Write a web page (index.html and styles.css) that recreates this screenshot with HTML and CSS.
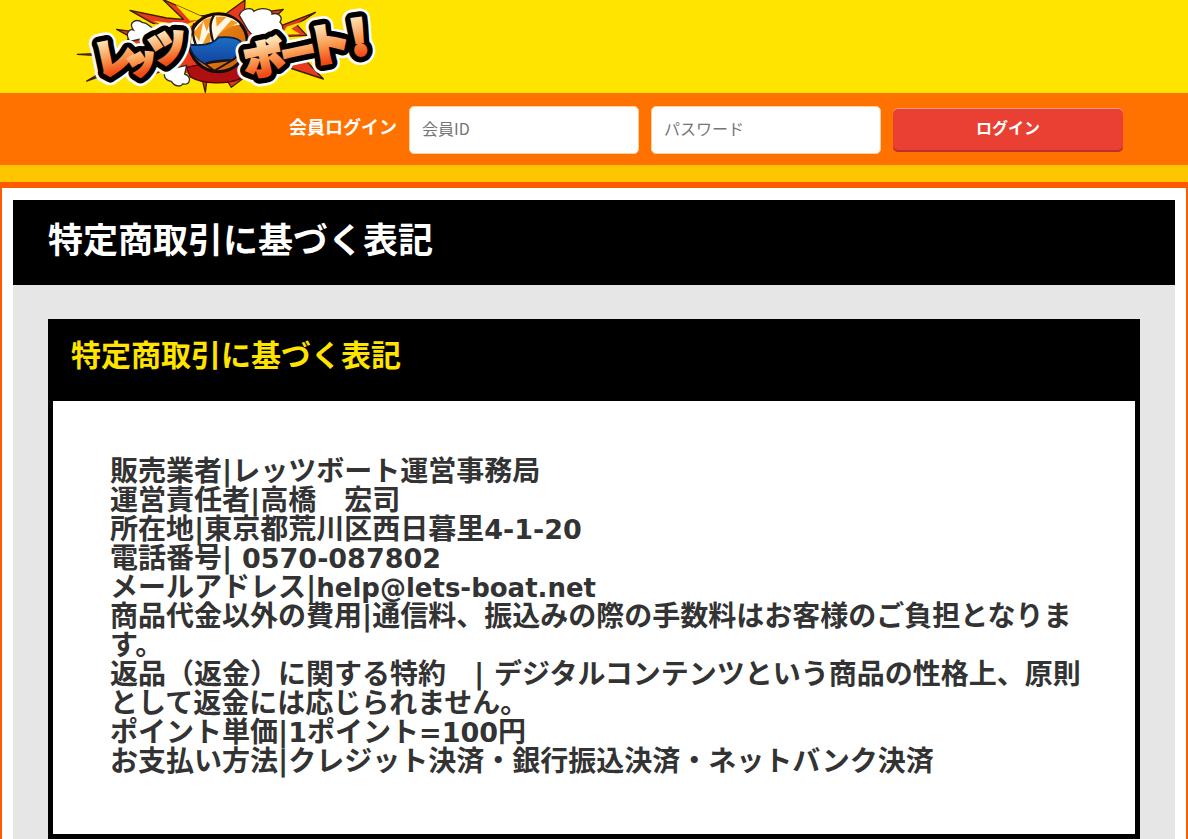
FILE: index.html
```
<!DOCTYPE html>
<html lang="ja">

<head>
    <meta charset="UTF-8">
    <meta name="viewport" content="width=device-width, initial-scale=1">
    <title>特定商取引に基づく表記 | レッツボート!</title>
    <link rel="stylesheet" href="styles.css">
</head>

<body>
    <!-- ヘッダー -->
    <header class="header">
        <a href="#" class="logo" aria-label="レッツボート!">
            <svg viewBox="0 0 930 279" xmlns="http://www.w3.org/2000/svg">
                <defs>
                    <linearGradient id="fire" x1="0" y1="0" x2="0" y2="1">
                        <stop offset="0.25" stop-color="#ffe2b4" />
                        <stop offset="0.55" stop-color="#fb9a50" />
                        <stop offset="0.82" stop-color="#f04a14" />
                    </linearGradient>
                    <linearGradient id="orange" x1="0" y1="0" x2="1" y2="1">
                        <stop offset="0" stop-color="#ff9a1a" />
                        <stop offset="1" stop-color="#c85a08" />
                    </linearGradient>
                    <linearGradient id="wave" x1="0" y1="0" x2="0" y2="1">
                        <stop offset="0" stop-color="#1c6fc4" />
                        <stop offset="1" stop-color="#1242a0" />
                    </linearGradient>
                    <g id="letters">
                        <text font-size="122" transform="translate(84 227) rotate(-12)">レ</text>
                        <text font-size="98" transform="translate(172 227) rotate(-12)">ッ</text>
                        <text font-size="112" transform="translate(248 196) rotate(-12)">ツ</text>
                        <text font-size="120" transform="translate(532 231) rotate(-12)">ボ</text>
                        <text font-size="102" transform="translate(642 203) rotate(-12)">ー</text>
                        <text font-size="132" transform="translate(718 192) rotate(-10)">ト</text>
                        <text font-size="142" transform="translate(846 168) rotate(-8)">!</text>
                    </g>
                </defs>
                <!-- 爆発 -->
                <g stroke="#3a2000" stroke-width="4" stroke-linejoin="round">
                    <path fill="#e8391f" d="M180 31 L290 54 L340 58 L278 -2 L392 48 L470 40 L525 0 L523 45 L640 28 L600 66 L636 76 L736 37 L680 74 L710 106 L640 110 L760 237 L660 204 L540 220 L484 262 L474 246 L410 245 L406 277 L398 244 L350 220 L290 206 L197 247 L240 205 L150 208 L50 243 L100 214 L130 170 L22 163 L145 158 L180 110 L140 88 L210 98 L300 96 L245 68 Z" />
                    <path fill="#ffe400" stroke="none" d="M210 76 L262 72 L300 92 L250 100 L200 96 Z M250 62 L345 74 L382 60 L350 90 L310 94 Z M316 14 L410 56 L360 62 Z M650 80 L704 62 L664 86 L690 102 L636 104 Z M280 210 L350 218 L380 240 L300 210 Z" />
                </g>
                <!-- 煙 -->
                <g fill="#fff" stroke="#332c22" stroke-width="4">
                    <path d="M177 120 C164 98 180 86 190 90 C172 66 200 54 218 68 C230 66 238 80 248 84 C240 110 220 118 177 124 Z" />
                    <path d="M508 46 C516 24 545 20 552 34 C570 20 608 26 606 42 C626 36 640 52 630 66 C646 82 638 106 616 110 C588 118 548 118 530 84 Z" />
                    <path d="M296 208 C276 218 280 240 304 244 C316 262 334 260 338 252 C362 256 366 230 344 222 L350 196 Z" />
                </g>
                <path d="M350 202 C400 190 480 185 522 196 L512 236 C470 254 400 254 360 230 Z" fill="#b00f12" stroke="#4a0505" stroke-width="4" />
                <!-- ヘルメット -->
                <circle cx="445" cy="128" r="87" fill="url(#orange)" stroke="#140c08" stroke-width="9" />
                <path d="M364 134 C360 86 396 54 432 48 C474 44 500 60 510 74 C474 76 444 94 428 132 Z" fill="#fff6e6" />
                <path d="M370 98 L400 62 L388 124 Z M398 60 L428 52 L410 94 L404 76 Z M438 50 L470 50 L440 80 Z M484 60 L504 68 L450 98 Z M414 100 L428 100 L418 130 L398 132 Z" fill="#f6981e" />
                <path d="M373 70 C366 90 370 116 378 136 M432 46 C418 66 418 90 432 132" fill="none" stroke="#20130c" stroke-width="7" />
                <path d="M358 134 C394 138 430 134 446 112 C472 110 498 112 512 124 C512 148 496 178 488 180 C458 186 430 184 405 192 C380 180 362 158 358 134 Z" fill="url(#wave)" stroke="#0c2046" stroke-width="5" />
                <path d="M406 192 C430 180 464 182 488 180 L510 162 M488 180 L434 212 M406 192 L434 213" fill="none" stroke="#1c120c" stroke-width="6" />
                <!-- ロゴ文字 -->
                <use href="#letters" class="logo-white" />
                <use href="#letters" class="logo-black" />
                <use href="#letters" class="logo-fill" />
            </svg>
        </a>
    </header>

    <!-- ログイン -->
    <form class="login">
        <label for="memberId">会員ログイン</label>
        <input type="text" id="memberId" placeholder="会員ID">
        <input type="password" id="password" placeholder="パスワード" aria-label="パスワード">
        <button type="submit">ログイン</button>
    </form>
    <div class="line"></div>

    <!-- メイン -->
    <main class="main">
        <h1>特定商取引に基づく表記</h1>
        <div class="content">
            <section class="box">
                <h2>特定商取引に基づく表記</h2>
                <div class="box-text">
                    販売業者|レッツボート運営事務局<br>
                    運営責任者|高橋　宏司<br>
                    所在地|東京都荒川区西日暮里<span class="num">4-1-20</span><br>
                    電話番号| <span class="num">0570-087802</span><br>
                    メールアドレス|<span class="mail">help@lets-boat.net</span><br>
                    商品代金以外の費用|通信料、振込みの際の手数料はお客様のご負担となります。<br>
                    返品（返金）に関する特約　| デジタルコンテンツという商品の性格上、原則として返金には応じられません。<br>
                    ポイント単価|<span class="num">1</span>ポイント<span class="num">=100</span>円<br>
                    お支払い方法|クレジット決済・銀行振込決済・ネットバンク決済
                </div>
            </section>
        </div>
    </main>
</body>

</html>
```
FILE: styles.css
```
* {
    box-sizing: border-box;
}

body {
    margin: 0;
    background: #fff;
    color: #333;
    font-family: "Noto Sans CJK JP", sans-serif;
}

/* ヘッダー */
.header {
    height: 93px;
    padding-left: 70px;
    background: #ffe400;
}

.logo {
    display: block;
    width: 310px;
}

.logo svg {
    display: block;
    width: 100%;
}

.logo text {
    font-family: "Noto Sans CJK JP", sans-serif;
    font-weight: 900;
}

.logo-white {
    fill: #fff;
    stroke: #fff;
    stroke-width: 58px;
    stroke-linejoin: round;
}

.logo-black {
    fill: #000;
    stroke: #000;
    stroke-width: 42px;
    stroke-linejoin: round;
}

.logo-fill {
    fill: url(#fire);
    stroke: url(#fire);
    stroke-width: 9px;
}

/* ログイン */
.login {
    display: flex;
    justify-content: flex-end;
    align-items: center;
    gap: 12px;
    height: 72px;
    padding: 2px 65px 0 12px;
    background: #ff7200;
}

.login label {
    padding-bottom: 8px;
    color: #fff;
    font-size: 18px;
    font-weight: bold;
}

.login input {
    width: 230px;
    height: 48px;
    padding: 0 12px 4px;
    border: 1px solid #ffd0a0;
    border-radius: 5px;
    background: #fff;
    font-family: inherit;
    font-size: 16px;
}

.login input::placeholder {
    color: #757575;
}

.login button {
    width: 230px;
    height: 44px;
    padding: 0 0 6px;
    border: none;
    border-radius: 5px;
    background: #e94033;
    box-shadow: inset 0 1px 0 #f3988f, inset 0 -2px 0 #b93127;
    color: #fff;
    font-family: inherit;
    font-size: 16px;
    font-weight: bold;
    cursor: pointer;
}

.line {
    height: 17px;
    background: #ffc600;
}

/* メイン */
.main {
    padding: 12px 11px;
    border: 2px solid #ff5a00;
    border-top-width: 6px;
}

h1 {
    margin: 0;
    padding: 13px 35px 22px;
    background: #000;
    color: #fff;
    font-size: 35px;
    line-height: 50px;
}

.content {
    padding: 34px 35px;
    background: #e6e6e6;
}

.box {
    border: 5px solid #000;
    background: #fff;
}

h2 {
    margin: 0;
    padding: 7px 18px 26px;
    background: #000;
    color: #ffe400;
    font-size: 30px;
    line-height: 44px;
}

.box-text {
    padding: 56px 48px 58px 57px;
    font-family: "DejaVu Sans", "Noto Sans CJK JP", sans-serif;
    font-size: 28px;
    font-weight: bold;
    line-height: 29px;
}

.num,
.mail {
    line-height: 1;
}

.num {
    font-size: 27px;
}

.mail {
    font-size: 26px;
}
```
